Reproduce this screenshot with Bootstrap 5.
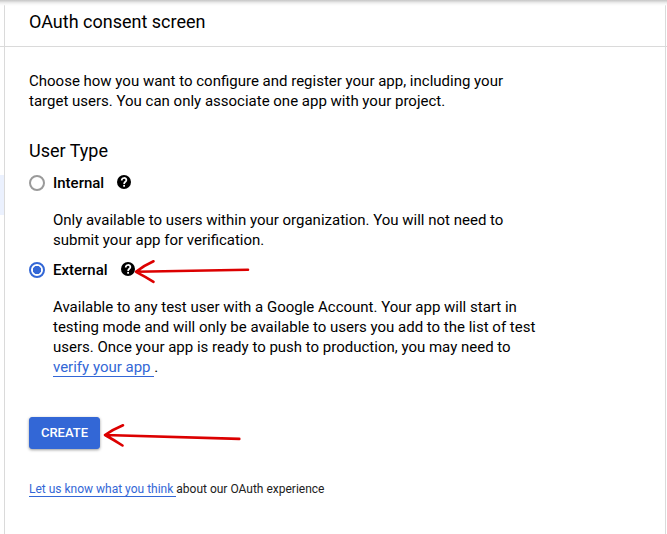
<!DOCTYPE html>
<html lang="en">
<head>
<meta charset="utf-8">
<meta name="viewport" content="width=device-width, initial-scale=1">
<title>OAuth consent screen</title>
<link href="https://cdn.jsdelivr.net/npm/bootstrap@5.3.0/dist/css/bootstrap.min.css" rel="stylesheet">
<style>
body{font-family:Roboto,"Liberation Sans",sans-serif;font-size:15px;line-height:20px;color:#000;height:534px;overflow:hidden}
.page-shell{height:534px}
.side-strip{width:4px;padding-top:175px}
.side-active{height:40px;background:#ebf1fe}
.side-rule{width:1px;background:#dadada}
.end-strip{width:1px}
.top-shadow{position:absolute;inset:0 0 auto 0;height:6px;background:linear-gradient(#c6c6c6 0,#d2d2d2 16%,#ececec 45%,#f9f9f9 75%,transparent)}
.title-bar{height:46px;padding:11px 24px 0}
.header-rule{position:absolute;top:46px;left:0;right:0;height:1px;background:#dadada}
.title-text{font-size:18px;line-height:22px;font-weight:400}
.content-area{padding:25px 24px 0}
.intro{width:500px}
.type-title{font-size:18px;line-height:24px;font-weight:400;margin-top:28px}
.type-row{height:20px;margin-top:10px}
.type-row .form-check-input{width:16px;height:16px;border:2px solid #9a9a9a;margin:0 8px 0 0;box-shadow:none;flex:none}
.type-row .form-check-input:checked{border-color:#3367d6;background:radial-gradient(circle,#3367d6 0 3.8px,#fff 4.5px)}
.type-row label{font-weight:500}
.help-icon{width:14px;height:14px;margin:0 0 2px 13px}
.type-desc{padding-left:24px;width:520px;margin-top:17px}
.plain-link{color:#3367d6;text-decoration:none;border-bottom:1px solid #3367d6;white-space:pre}
.btn-create{--bs-btn-bg:#3367d6;--bs-btn-border-color:#3367d6;--bs-btn-color:#fff;--bs-btn-border-radius:3px;width:71px;height:32px;padding:0;font-size:13px;font-weight:500;line-height:30px;box-shadow:0 1px 3px rgba(0,0,0,.4)}
.create-row{margin-top:40px}
.feedback{font-size:12px;line-height:16px;color:#212121;margin-top:32px}
.arrows{position:absolute;left:0;top:0;pointer-events:none}
</style>
<script src="https://cdn.jsdelivr.net/npm/bootstrap@5.3.0/dist/js/bootstrap.bundle.min.js"></script>
</head>
<body class="bg-white">
<div class="page-shell position-relative d-flex">
  <div class="side-strip"><div class="side-active"></div></div>
  <div class="side-rule"></div>
  <main class="flex-grow-1">
    <header class="title-bar"><h1 class="title-text m-0">OAuth consent screen</h1></header>
    <div class="content-area">
      <p class="intro mb-0">Choose how you want to configure and register your app, including your<br>target users. You can only associate one app with your project.</p>
      <h2 class="type-title mb-0">User Type</h2>
      <div class="type-row d-flex align-items-center">
        <input class="form-check-input" type="radio" name="userType" id="internal">
        <label for="internal">Internal</label>
        <svg class="help-icon" viewBox="0 0 14 14"><circle cx="7" cy="7" r="7" fill="#000"/><path d="M4.7 5.5C4.7 2.1 9.4 2.3 9.4 5.1C9.4 6.8 7.1 6.8 7.1 8.9" fill="none" stroke="#fff" stroke-width="1.7"/><rect x="6.2" y="9.9" width="1.8" height="1.8" fill="#fff"/></svg>
      </div>
      <p class="type-desc mb-0">Only available to users within your organization. You will not need to<br>submit your app for verification.</p>
      <div class="type-row d-flex align-items-center">
        <input class="form-check-input" type="radio" name="userType" id="external" checked>
        <label for="external">External</label>
        <svg class="help-icon" viewBox="0 0 14 14"><circle cx="7" cy="7" r="7" fill="#000"/><path d="M4.7 5.5C4.7 2.1 9.4 2.3 9.4 5.1C9.4 6.8 7.1 6.8 7.1 8.9" fill="none" stroke="#fff" stroke-width="1.7"/><rect x="6.2" y="9.9" width="1.8" height="1.8" fill="#fff"/></svg>
      </div>
      <p class="type-desc mb-0">Available to any test user with a Google Account. Your app will start in<br>testing mode and will only be available to users you add to the list of test<br>users. Once your app is ready to push to production, you may need to<br><a class="plain-link" href="#">verify your app </a>.</p>
      <div class="create-row d-flex"><button class="btn btn-primary btn-create" type="button">CREATE</button></div>
      <p class="feedback mb-0"><a class="plain-link" href="#">Let us know what you think </a>about our OAuth experience</p>
    </div>
  </main>
  <div class="side-rule"></div>
  <div class="end-strip"></div>
  <div class="header-rule"></div>
  <div class="top-shadow"></div>
  <svg class="arrows" width="667" height="534" fill="none" stroke="#dc0000" stroke-width="2.6" stroke-linecap="round" stroke-linejoin="round">
    <path d="M248 269.800L136 271.800M153.500 261.300Q144 265.500 136 271.800Q145 276.500 153.500 281.800"/>
    <path d="M239.300 438.900L105 435M123 425.300Q113 429.500 105 435Q114 440 122.500 445.500"/>
  </svg>
</div>
</body>
</html>
